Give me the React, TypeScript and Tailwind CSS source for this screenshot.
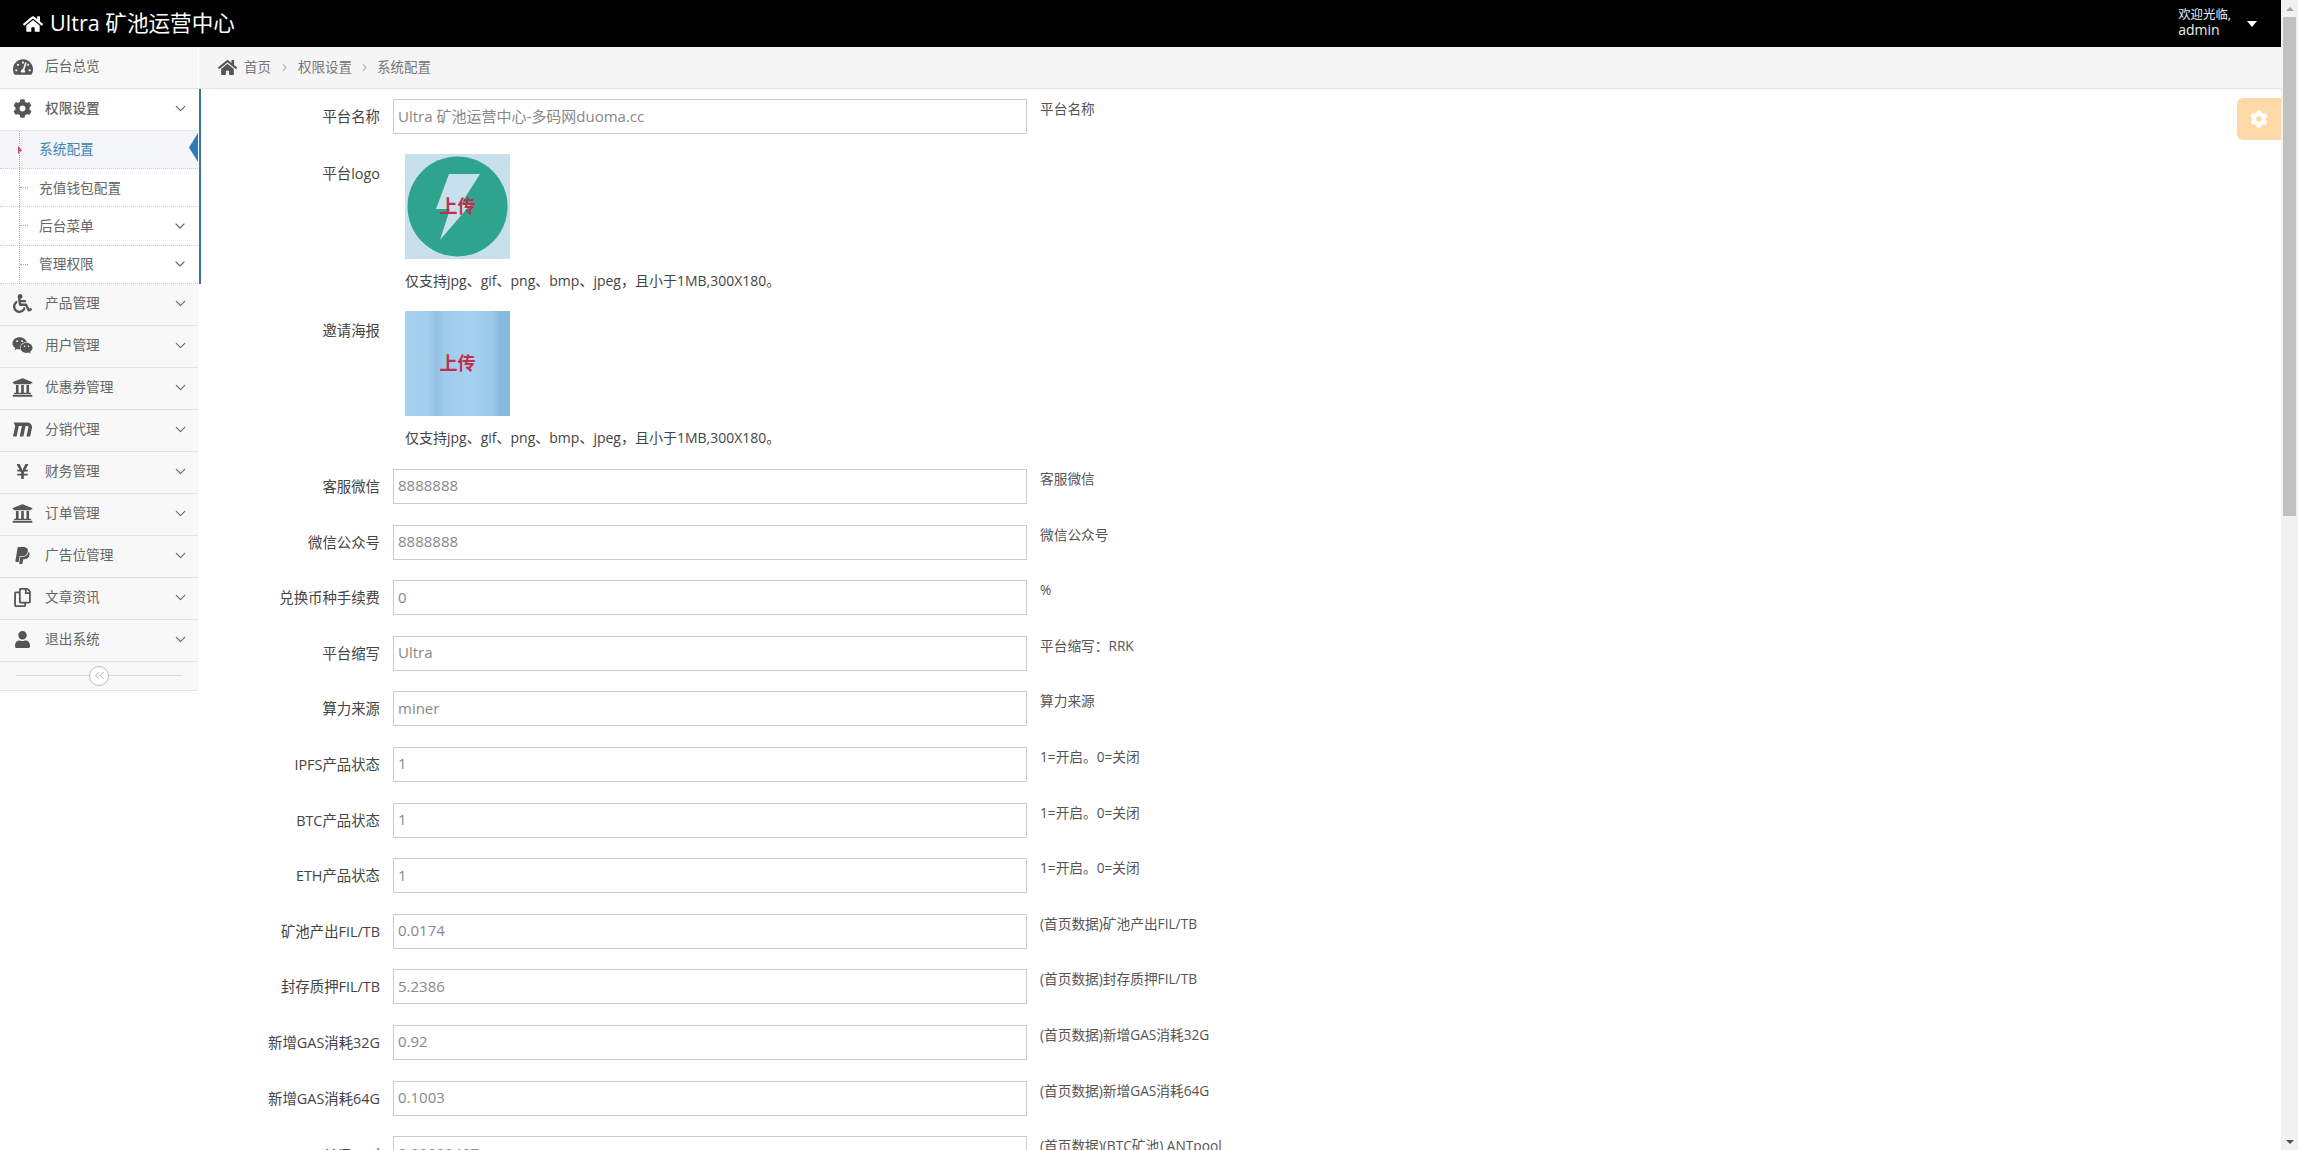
import type { ReactNode } from "react";
import { ChevronDown, ChevronRight, ChevronsLeft } from "lucide-react";
import {
  FaCog,
  FaHome,
  FaMaxcdn,
  FaPaypal,
  FaRegCopy,
  FaTachometerAlt,
  FaUniversity,
  FaUser,
  FaWeixin,
  FaWheelchair,
  FaYenSign,
} from "react-icons/fa";

const menus = [
  { name: "产品管理", icon: <FaWheelchair size={19} /> },
  { name: "用户管理", icon: <FaWeixin size={21} /> },
  { name: "优惠券管理", icon: <FaUniversity size={21} /> },
  { name: "分销代理", icon: <FaMaxcdn size={19} /> },
  { name: "财务管理", icon: <FaYenSign size={17} /> },
  { name: "订单管理", icon: <FaUniversity size={21} /> },
  { name: "广告位管理", icon: <FaPaypal size={19} /> },
  { name: "文章资讯", icon: <FaRegCopy size={19} /> },
  { name: "退出系统", icon: <FaUser size={17} /> },
];

const firstRows = [{ label: "平台名称", value: "Ultra 矿池运营中心-多码网duoma.cc", help: "平台名称" }];

const rows = [
  { label: "客服微信", value: "8888888", help: "客服微信" },
  { label: "微信公众号", value: "8888888", help: "微信公众号" },
  { label: "兑换币种手续费", value: "0", help: "%" },
  { label: "平台缩写", value: "Ultra", help: "平台缩写：RRK" },
  { label: "算力来源", value: "miner", help: "算力来源" },
  { label: "IPFS产品状态", value: "1", help: "1=开启。0=关闭" },
  { label: "BTC产品状态", value: "1", help: "1=开启。0=关闭" },
  { label: "ETH产品状态", value: "1", help: "1=开启。0=关闭" },
  { label: "矿池产出FIL/TB", value: "0.0174", help: "(首页数据)矿池产出FIL/TB" },
  { label: "封存质押FIL/TB", value: "5.2386", help: "(首页数据)封存质押FIL/TB" },
  { label: "新增GAS消耗32G", value: "0.92", help: "(首页数据)新增GAS消耗32G" },
  { label: "新增GAS消耗64G", value: "0.1003", help: "(首页数据)新增GAS消耗64G" },
  { label: "ANTpool", value: "0.00000497", help: "(首页数据)(BTC矿池) ANTpool" },
];

function MenuRow({
  name,
  icon,
  open,
  bold,
  noArrow,
}: {
  name: string;
  icon: ReactNode;
  open?: boolean;
  bold?: boolean;
  noArrow?: boolean;
}) {
  return (
    <div
      className={`flex h-[42px] items-center border-b border-[#e4e4e4] pb-[2px] ${open ? "bg-white" : "bg-[#f8f8f8]"}`}
    >
      <span className="flex w-[45px] shrink-0 justify-center text-[#555]">{icon}</span>
      <span className={`flex-1 text-[13.7px] text-[#666] ${bold ? "font-medium" : ""}`}>{name}</span>
      {!noArrow && <ChevronDown size={17} strokeWidth={1.6} className="mr-[9px] text-[#666]" />}
    </div>
  );
}

function SubRow({ name, active, more }: { name: string; active?: boolean; more?: boolean }) {
  return (
    <div
      className={`relative flex h-[38.2px] items-center border-b border-dotted border-[#ccc] pl-[39px] ${active ? "bg-[#f4f6f9]" : "bg-white"}`}
    >
      {active ? (
        <span className="absolute left-[18px] h-0 w-0 border-y-[4px] border-l-[4px] border-y-transparent border-l-[#c9485b]" />
      ) : (
        <span className="absolute left-[20px] w-[8px] border-t border-dotted border-[#aaa]" />
      )}
      <span className={`flex-1 text-[13.7px] ${active ? "text-[#3f86b5]" : "text-[#666]"}`}>{name}</span>
      {more && <ChevronDown size={16} strokeWidth={1.6} className="mr-[10px] text-[#666]" />}
      {active && (
        <span className="absolute right-0 top-[2px] h-[29px] w-[9px] bg-[#2b7bb9] [clip-path:polygon(100%_0,100%_100%,0_50%)]" />
      )}
    </div>
  );
}

function Sidebar() {
  return (
    <aside className="w-[198px] shrink-0">
      <MenuRow name="后台总览" icon={<FaTachometerAlt size={20} />} noArrow />
      <div className="relative">
        <span className="absolute left-[199px] top-0 h-full w-[2px] bg-[#3a76a0]" />
        <MenuRow name="权限设置" icon={<FaCog size={19} />} open bold />
        <div className="relative">
          <span className="absolute bottom-0 left-[19px] top-0 z-10 border-l border-dotted border-[#aaa]" />
          <SubRow name="系统配置" active />
          <SubRow name="充值钱包配置" />
          <SubRow name="后台菜单" more />
          <SubRow name="管理权限" more />
        </div>
      </div>
      {menus.map((m) => (
        <MenuRow key={m.name} name={m.name} icon={m.icon} />
      ))}
      <div className="flex h-[28.8px] items-center justify-center border-b border-[#e4e4e4] bg-[#f8f8f8] px-[16px]">
        <div className="h-px flex-1 bg-[#ddd]" />
        <span className="flex h-[20px] w-[20px] items-center justify-center rounded-full border border-[#bbb] bg-white text-[#999]">
          <ChevronsLeft size={15} strokeWidth={1.4} />
        </span>
        <div className="h-px flex-1 bg-[#ddd]" />
      </div>
    </aside>
  );
}

function Field({ label, value, help }: { label: string; value: string; help: string }) {
  return (
    <div className="mb-[20.6px] flex h-[35px] shrink-0">
      <label className="w-[182px] shrink-0 text-right text-[14.4px] leading-[35px] text-[#444]">{label}</label>
      <input
        readOnly
        value={value}
        className="ml-[13px] h-[35px] w-[634px] shrink-0 border border-[#ccc] bg-white px-[4px] pb-[2px] text-[15px] text-[#888] outline-none"
      />
      <span className="ml-[13px] whitespace-nowrap text-[13.7px] leading-[20px] text-[#555]">{help}</span>
    </div>
  );
}

function LogoTile() {
  return (
    <div className="relative flex h-[105px] w-[105px] items-center justify-center bg-[#c8e0ec]">
      <svg viewBox="0 0 105 105" className="absolute inset-0 h-full w-full">
        <ellipse cx="52.5" cy="52.5" rx="50" ry="50" fill="#2ea38d" />
        <path d="M44 20 L75 20 L56 50 L66 50 L35 86 L45 55 L31 55 Z" fill="#c8e0ec" />
      </svg>
      <span className="relative text-[18px] font-bold text-[#c0304a]">上传</span>
    </div>
  );
}

function PosterTile() {
  return (
    <div className="flex h-[105px] w-[105px] items-center justify-center bg-[linear-gradient(90deg,#a5d0ee_0%,#a3cfee_22%,#93c1e4_30%,#a0cbec_38%,#a5d0ee_60%,#9fcbeb_82%,#88b9dc_90%,#88b9dc_100%)]">
      <span className="text-[18px] font-bold text-[#c0304a]">上传</span>
    </div>
  );
}

function UploadRow({ label, tile }: { label: string; tile: ReactNode }) {
  return (
    <div className="flex h-[157.2px] shrink-0">
      <label className="w-[182px] shrink-0 pt-[8px] text-right text-[14.4px] leading-[22px] text-[#444]">{label}</label>
      <div className="ml-[25px] -mt-[1px]">
        {tile}
        <p className="mt-[11px] whitespace-nowrap text-[14px] leading-[22px] text-[#444]">
          仅支持jpg、gif、png、bmp、jpeg，且小于1MB,300X180。
        </p>
      </div>
    </div>
  );
}

function Scrollbar() {
  return (
    <div className="flex h-full w-[17px] shrink-0 flex-col items-center bg-[#f1f1f1]">
      <div className="flex h-[17px] shrink-0 items-center justify-center">
        <span className="h-0 w-0 border-x-[4px] border-b-[4px] border-x-transparent border-b-[#a3a3a3]" />
      </div>
      <div className="h-[499px] w-[13px] bg-[#c1c1c1]" />
      <div className="flex-1" />
      <div className="flex h-[17px] shrink-0 items-center justify-center">
        <span className="h-0 w-0 border-x-[4px] border-t-[4px] border-x-transparent border-t-[#505050]" />
      </div>
    </div>
  );
}

export default function App() {
  return (
    <div className="flex h-[1150px] w-full overflow-hidden bg-white font-['Open_Sans','Noto_Sans_CJK_SC',sans-serif]">
      <div className="flex min-w-0 flex-1 flex-col">
        <header className="flex h-[47px] shrink-0 items-center bg-black pl-[23px] text-white">
          <FaHome size={20} />
          <span className="ml-[7px] text-[21.6px]">Ultra 矿池运营中心</span>
          <div className="flex-1" />
          <div className="-mt-[3px] text-[#eee]">
            <div className="text-[12.4px] leading-[15px]">欢迎光临,</div>
            <div className="text-[14px] leading-[15px]">admin</div>
          </div>
          <span className="ml-[16px] mr-[24px] h-0 w-0 border-x-[5px] border-t-[6px] border-x-transparent border-t-white" />
        </header>
        <div className="flex min-h-0 flex-1">
          <Sidebar />
          <main className="relative min-w-0 flex-1 overflow-hidden">
            <div className="ml-[1px] flex h-[42px] items-center border-b border-[#e4e4e4] bg-[#f5f5f5] pl-[19px] text-[13.5px] text-[#777]">
              <FaHome size={19} className="text-[#555]" />
              <span className="ml-[7px]">首页</span>
              <ChevronRight size={13} className="mx-[7px] text-[#bbb]" />
              <span>权限设置</span>
              <ChevronRight size={13} className="mx-[6px] text-[#bbb]" />
              <span>系统配置</span>
            </div>
            <form className="flex flex-col pt-[10px]">
              {firstRows.map((r) => (
                <Field key={r.label} {...r} />
              ))}
              <UploadRow label="平台logo" tile={<LogoTile />} />
              <UploadRow label="邀请海报" tile={<PosterTile />} />
              {rows.map((r) => (
                <Field key={r.label} {...r} />
              ))}
            </form>
            <div className="absolute right-0 top-[51px] flex h-[42px] w-[44px] items-center justify-center rounded-l-md bg-[#fdd9a8] text-white">
              <FaCog size={18} />
            </div>
          </main>
        </div>
      </div>
      <Scrollbar />
    </div>
  );
}
